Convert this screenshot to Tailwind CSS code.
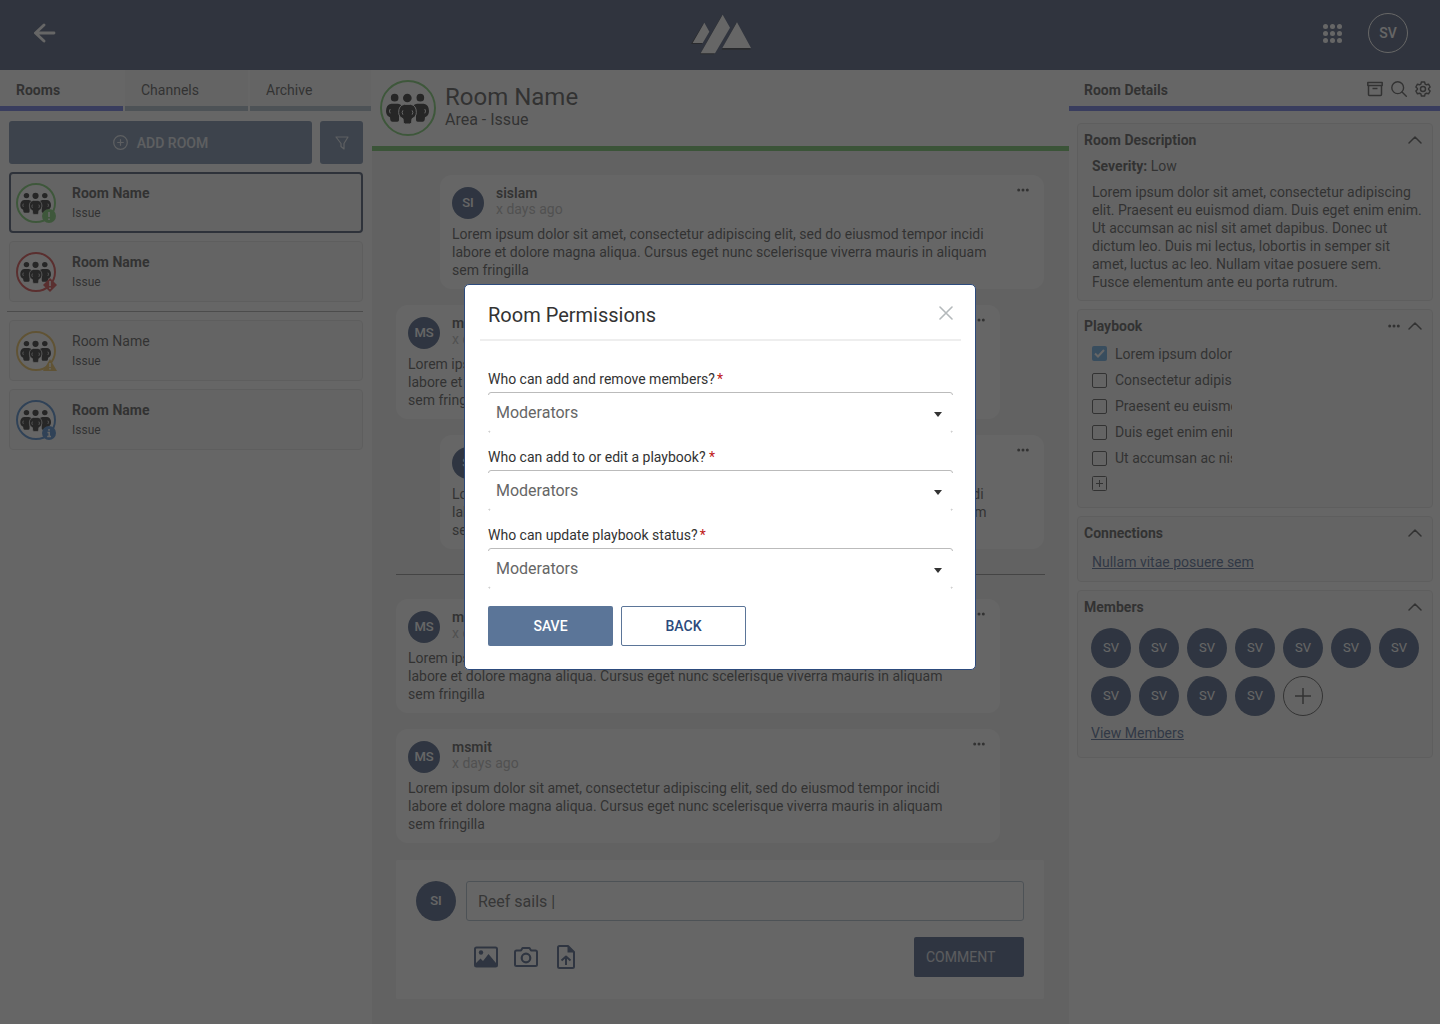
<!DOCTYPE html>
<html lang="en">
  <head>
    <meta charset="utf-8" />
    <meta name="viewport" content="width=device-width, initial-scale=1" />
    <title>Room Permissions</title>
    <script src="https://cdn.jsdelivr.net/npm/@tailwindcss/browser@4"></script>
  </head>
  <body class="min-h-screen flex flex-col bg-white font-['Roboto',sans-serif] text-sm text-[#333]">

    <!-- shared icons -->
    <svg class="hidden" aria-hidden="true">
      <symbol id="people" viewBox="30 60 168 168">
        <g fill="#000">
          <circle cx="74" cy="113" r="11.500" />
          <circle cx="151" cy="113" r="11.500" />
          <circle cx="112" cy="114" r="13" />
          <path d="M64 131h20q12 2 12 10l-9 12v27q0 5-5 5H67q-5 0-6-5l-1-8q-12-5-12-19 0-19 16-22z" />
          <path d="M161 131h-20q-12 2-12 10l9 12v27q0 5 5 5h15q5 0 6-5l1-8q12-5 12-19 0-19-16-22z" />
        </g>
        <path d="M103 133h19q17 3 17 24 0 14-13 19l-1 11q-1 5-6 5h-13q-5 0-6-5l-1-11q-13-5-13-19 0-21 17-24z" fill="#000" stroke="#fff" stroke-width="3" />
        <path d="M60 148q-4 5 0 11M165 148q4 5 0 11M98 152q-4 5 0 11M127 152q4 5 0 11" fill="none" stroke="#fff" stroke-width="3" stroke-linecap="round" />
      </symbol>
      <symbol id="chevron" viewBox="0 0 14 8">
        <path d="M1 7l6-6 6 6" fill="none" stroke="currentColor" stroke-width="1.500" stroke-linecap="round" stroke-linejoin="round" />
      </symbol>
      <symbol id="dots" viewBox="0 0 12 4">
        <circle cx="1.700" cy="2" r="1.500" /><circle cx="6" cy="2" r="1.500" /><circle cx="10.300" cy="2" r="1.500" />
      </symbol>
    </svg>

    <header class="h-[70px] bg-[#2b3b5f] grid grid-cols-3 items-center pl-[34px] pr-8 text-white">
      <a href="#" aria-label="Back" class="w-6 mb-[2px]">
        <svg class="w-[22px] h-[22px]" viewBox="0 0 22 22" fill="none" stroke="currentColor" stroke-width="2.800" stroke-linecap="round"><path d="M20 10H2M10 2L1.500 10l8.500 8" /></svg>
      </a>
      <svg class="w-[62px] h-[42px] justify-self-center" viewBox="89 42 186 126">
        <path d="M129 71l15 27-20 34H92zM184 47l22 39-45 77h-42zM227 70l44 79h-87z" fill="#000" opacity=".7" />
        <path d="M132 68l15 27-20 34H97zM187 44l22 39-45 77h-43zM230 67l42 77h-86z" fill="#fff" />
      </svg>
      <div class="flex items-center justify-end gap-[26px]">
        <button aria-label="Apps" class="mb-1">
          <svg class="w-[19px] h-[19px]" viewBox="0 0 19 19" fill="currentColor">
            <circle cx="2.500" cy="2.500" r="2.500" /><circle cx="9.500" cy="2.500" r="2.500" /><circle cx="16.500" cy="2.500" r="2.500" />
            <circle cx="2.500" cy="9.500" r="2.500" /><circle cx="9.500" cy="9.500" r="2.500" /><circle cx="16.500" cy="9.500" r="2.500" />
            <circle cx="2.500" cy="16.500" r="2.500" /><circle cx="9.500" cy="16.500" r="2.500" /><circle cx="16.500" cy="16.500" r="2.500" />
          </svg>
        </button>
        <button class="w-10 h-10 mb-1 rounded-full border border-white font-medium">SV</button>
      </div>
    </header>

    <div class="flex-1 flex">

      <!-- rooms list -->
      <aside class="w-[372px] shrink-0 pr-px">
        <nav class="flex gap-[2px]">
          <a href="#" class="w-[123px] h-[41px] pl-4 leading-[41px] font-bold border-b-[5px] border-[#4b5be0]">Rooms</a>
          <a href="#" class="w-[123px] h-[41px] pl-4 leading-[41px] bg-[#f7f7f7] border-b-[5px] border-[#9bafbf]">Channels</a>
          <a href="#" class="flex-1 h-[41px] pl-4 leading-[41px] bg-[#f7f7f7] border-b-[5px] border-[#9bafbf]">Archive</a>
        </nav>
        <div class="flex flex-col gap-2 pl-[9px] pr-2 pt-[10px]">
          <div class="flex gap-2">
            <button class="flex-1 h-[43px] flex items-center justify-center gap-[9px] rounded-[3px] bg-[#5b7598] text-white/80 font-medium">
              <svg class="w-[15px] h-[15px]" viewBox="0 0 15 15" fill="none" stroke="currentColor" stroke-width="1.200" stroke-linecap="round"><circle cx="7.500" cy="7.500" r="6.800" /><path d="M7.500 4.700v5.600M4.700 7.500h5.600" /></svg>
              ADD ROOM
            </button>
            <button aria-label="Filter" class="w-[43px] h-[43px] flex items-center justify-center rounded-[3px] bg-[#5b7598] text-white/80">
              <svg class="w-[14px] h-[14px]" viewBox="0 0 14 14" fill="none" stroke="currentColor" stroke-width="1.200" stroke-linejoin="round"><path d="M1 1h12L9 7.500V13L6 10.500v-3z" /></svg>
            </button>
          </div>
          <a href="#" class="h-[61px] flex items-center gap-4 pl-[5px] rounded-[4px] border-2 border-[#22324f] bg-[#f7f7f7]">
            <span class="relative w-10 h-10 rounded-full border-2 border-[#62c454] bg-white">
              <svg class="w-10 h-10 -m-[2px]"><use href="#people" /></svg>
              <svg class="absolute -right-[2px] -bottom-[2px] w-[14px] h-[14px]" viewBox="0 0 14 14"><circle cx="7" cy="7" r="7" fill="#62c454" /><path d="M7 3v5M7 9.500v1.500" stroke="#fff" stroke-width="1.600" /></svg>
            </span>
            <span><b class="block leading-5">Room Name</b><span class="block text-xs leading-5">Issue</span></span>
          </a>
          <a href="#" class="h-[61px] flex items-center gap-4 pl-[6px] rounded-[4px] border border-[#e0e0e0] bg-[#f7f7f7]">
            <span class="relative w-10 h-10 rounded-full border-2 border-[#cf2525] bg-white">
              <svg class="w-10 h-10 -m-[2px]"><use href="#people" /></svg>
              <svg class="absolute -right-[3px] -bottom-[2px] w-[14px] h-[14px]" viewBox="0 0 14 14"><path d="M7 0l7 7-7 7-7-7z" fill="#cf2525" /><path d="M7 3v5M7 9.500v1.500" stroke="#fff" stroke-width="1.600" /></svg>
            </span>
            <span><b class="block leading-5">Room Name</b><span class="block text-xs leading-5">Issue</span></span>
          </a>
          <hr class="mt-px -ml-[2px] border-[#999]" />
          <a href="#" class="h-[61px] flex items-center gap-4 pl-[6px] rounded-[4px] border border-[#e0e0e0] bg-[#f7f7f7]">
            <span class="relative w-10 h-10 rounded-full border-2 border-[#e8b53c] bg-white">
              <svg class="w-10 h-10 -m-[2px]"><use href="#people" /></svg>
              <svg class="absolute -right-[3px] -bottom-[2px] w-[14px] h-[12px]" viewBox="0 0 14 12"><path d="M7 0l7 12H0z" fill="#e8b53c" /><path d="M7 4v4M7 9v1.500" stroke="#fff" stroke-width="1.500" /></svg>
            </span>
            <span><span class="block leading-5">Room Name</span><span class="block text-xs leading-5">Issue</span></span>
          </a>
          <a href="#" class="h-[61px] flex items-center gap-4 pl-[6px] rounded-[4px] border border-[#e0e0e0] bg-[#f7f7f7]">
            <span class="relative w-10 h-10 rounded-full border-2 border-[#2a72c4] bg-white">
              <svg class="w-10 h-10 -m-[2px]"><use href="#people" /></svg>
              <svg class="absolute -right-[2px] -bottom-[2px] w-[14px] h-[14px]" viewBox="0 0 14 14"><circle cx="7" cy="7" r="7" fill="#2a72c4" /><path d="M7 3v1.700M5.500 6.500h1.700V10M5.200 10.500h3.800" fill="none" stroke="#fff" stroke-width="1.500" /></svg>
            </span>
            <span><b class="block leading-5">Room Name</b><span class="block text-xs leading-5">Issue</span></span>
          </a>
        </div>
      </aside>

      <!-- conversation -->
      <main class="flex-1 min-w-0 bg-[#f0f0f0]">
        <div class="h-[81px] flex gap-[9px] pl-2 pt-[10px] bg-white border-b-[5px] border-[#56b848]">
          <span class="w-14 h-14 rounded-full border-2 border-[#62c454]"><svg class="w-14 h-14 -m-[2px]"><use href="#people" /></svg></span>
          <div class="pt-[2px]">
            <h1 class="text-2xl leading-[30px]">Room Name</h1>
            <p class="text-base leading-4">Area - Issue</p>
          </div>
        </div>
        <div class="pl-6 pr-[25px] pt-6">
          <div class="flex flex-col gap-4">
            <article class="relative ml-[44px] px-3 pt-3 pb-[10px] rounded-xl bg-white">
              <div class="flex gap-3">
                <span class="w-8 h-8 flex items-center justify-center rounded-full bg-[#273f6b] text-white text-[13px] font-medium">SI</span>
                <div class="-mt-[2px] leading-4"><b class="block font-semibold">sislam</b><span class="text-[#aaa]">x days ago</span></div>
              </div>
              <button aria-label="More" class="absolute top-[13px] right-[15px] leading-none"><svg class="w-3 h-1 fill-[#333]"><use href="#dots" /></svg></button>
              <p class="mt-[6px] leading-[18px]">Lorem ipsum dolor sit amet, consectetur adipiscing elit, sed do eiusmod tempor incidi<br />labore et dolore magna aliqua. Cursus eget nunc scelerisque viverra mauris in aliquam<br />sem fringilla</p>
            </article>
            <article class="relative mr-[44px] px-3 pt-3 pb-[10px] rounded-xl bg-white">
              <div class="flex gap-3">
                <span class="w-8 h-8 flex items-center justify-center rounded-full bg-[#273f6b] text-white text-[13px] font-medium">MS</span>
                <div class="-mt-[2px] leading-4"><b class="block font-semibold">msmit</b><span class="text-[#aaa]">x days ago</span></div>
              </div>
              <button aria-label="More" class="absolute top-[13px] right-[15px] leading-none"><svg class="w-3 h-1 fill-[#333]"><use href="#dots" /></svg></button>
              <p class="mt-[6px] leading-[18px]">Lorem ipsum dolor sit amet, consectetur adipiscing elit, sed do eiusmod tempor incidi<br />labore et dolore magna aliqua. Cursus eget nunc scelerisque viverra mauris in aliquam<br />sem fringilla</p>
            </article>
            <article class="relative ml-[44px] px-3 pt-3 pb-[10px] rounded-xl bg-white">
              <div class="flex gap-3">
                <span class="w-8 h-8 flex items-center justify-center rounded-full bg-[#273f6b] text-white text-[13px] font-medium">SI</span>
                <div class="-mt-[2px] leading-4"><b class="block font-semibold">sislam</b><span class="text-[#aaa]">x days ago</span></div>
              </div>
              <button aria-label="More" class="absolute top-[13px] right-[15px] leading-none"><svg class="w-3 h-1 fill-[#333]"><use href="#dots" /></svg></button>
              <p class="mt-[6px] leading-[18px]">Lorem ipsum dolor sit amet, consectetur adipiscing elit, sed do eiusmod tempor incidi<br />labore et dolore magna aliqua. Cursus eget nunc scelerisque viverra mauris in aliquam<br />sem fringilla</p>
            </article>
          </div>
          <hr class="mt-[25px] mb-6 -mr-px border-[#777]" />
          <div class="flex flex-col gap-4">
            <article class="relative mr-[44px] px-3 pt-3 pb-[10px] rounded-xl bg-white">
              <div class="flex gap-3">
                <span class="w-8 h-8 flex items-center justify-center rounded-full bg-[#273f6b] text-white text-[13px] font-medium">MS</span>
                <div class="-mt-[2px] leading-4"><b class="block font-semibold">msmit</b><span class="text-[#aaa]">x days ago</span></div>
              </div>
              <button aria-label="More" class="absolute top-[13px] right-[15px] leading-none"><svg class="w-3 h-1 fill-[#333]"><use href="#dots" /></svg></button>
              <p class="mt-[6px] leading-[18px]">Lorem ipsum dolor sit amet, consectetur adipiscing elit, sed do eiusmod tempor incidi<br />labore et dolore magna aliqua. Cursus eget nunc scelerisque viverra mauris in aliquam<br />sem fringilla</p>
            </article>
            <article class="relative mr-[44px] px-3 pt-3 pb-[10px] rounded-xl bg-white">
              <div class="flex gap-3">
                <span class="w-8 h-8 flex items-center justify-center rounded-full bg-[#273f6b] text-white text-[13px] font-medium">MS</span>
                <div class="-mt-[2px] leading-4"><b class="block font-semibold">msmit</b><span class="text-[#aaa]">x days ago</span></div>
              </div>
              <button aria-label="More" class="absolute top-[13px] right-[15px] leading-none"><svg class="w-3 h-1 fill-[#333]"><use href="#dots" /></svg></button>
              <p class="mt-[6px] leading-[18px]">Lorem ipsum dolor sit amet, consectetur adipiscing elit, sed do eiusmod tempor incidi<br />labore et dolore magna aliqua. Cursus eget nunc scelerisque viverra mauris in aliquam<br />sem fringilla</p>
            </article>
          </div>
          <form class="mt-[17px] px-5 pt-[21px] pb-[22px] rounded-[2px] bg-white">
            <div class="flex gap-[10px]">
              <span class="w-10 h-10 flex items-center justify-center rounded-full bg-[#273f6b] text-white text-[13px] font-medium">SI</span>
              <input type="text" aria-label="Comment" value="Reef sails |" class="flex-1 h-10 px-[11px] rounded-[3px] border border-[#9bafbf] text-base text-[#444]" />
            </div>
            <div class="mt-4 flex items-center gap-4 pl-[58px] text-[#273f6b]">
              <button type="button" aria-label="Add image"><svg class="w-6 h-6" viewBox="0 0 24 24" fill="none" stroke="currentColor" stroke-width="2"><rect x="1" y="2.500" width="22" height="19" rx="1.500" /><circle cx="7" cy="7.500" r="2.200" fill="currentColor" stroke="none" /><path d="M2 21v-3l4.500-4.500L9 16l5.500-7 7.500 9v3z" fill="currentColor" stroke="none" /></svg></button>
              <button type="button" aria-label="Take photo"><svg class="w-6 h-6" viewBox="0 0 24 24" fill="none" stroke="currentColor" stroke-width="2" stroke-linejoin="round"><path d="M2.500 5.500H7L8.500 3h7L17 5.500h4.500q1.500 0 1.500 1.500v12.500q0 1.500-1.500 1.500h-19Q1 21 1 19.500V7q0-1.500 1.500-1.500z" /><circle cx="12" cy="13" r="4.300" stroke-width="2.200" /></svg></button>
              <button type="button" aria-label="Attach file"><svg class="w-6 h-6" viewBox="0 0 24 24" fill="none" stroke="currentColor" stroke-width="2" stroke-linejoin="round"><path d="M5.500 1H14l6 6v14.500q0 1.500-1.500 1.500h-13Q4 23 4 21.500v-19Q4 1 5.500 1z" /><path d="M13.500 1v6.500H20z" fill="currentColor" stroke="none" /><path d="M12 20v-8.500M7.500 15.500l4.500-4 4.500 4" /></svg></button>
              <button type="submit" class="ml-auto w-[110px] h-10 pl-3 rounded-[2px] bg-[#273f6b] text-left text-white/80">COMMENT</button>
            </div>
          </form>
        </div>
      </main>

      <!-- room details -->
      <aside class="w-[371px] shrink-0">
        <div class="h-[41px] flex items-center gap-2 pl-[15px] pr-[9px] pt-[2px] border-b-[5px] border-[#4b5be0]">
          <h2 class="font-bold pt-[2px] mr-auto">Room Details</h2>
          <button aria-label="Archive room"><svg class="w-4 h-4" viewBox="0 0 16 16" fill="none" stroke="currentColor" stroke-width="1.500" stroke-linejoin="round"><path d="M.8 1.500h14.400v3H.8zM1.500 4.500v9q0 .9.900.9h11.200q.9 0 .9-.9v-9M5.500 7.500h5" /></svg></button>
          <button aria-label="Search"><svg class="w-4 h-4" viewBox="0 0 16 16" fill="none" stroke="currentColor" stroke-width="1.400" stroke-linecap="round"><circle cx="6.700" cy="6.700" r="5.900" /><path d="M11 11l4.300 4.300" /></svg></button>
          <button aria-label="Settings"><svg class="w-4 h-4" viewBox="0 0 24 24" fill="none" stroke="currentColor" stroke-width="2.200" stroke-linejoin="round"><path d="M9.600 1.500h4.800l.8 3.100 2 1.100 3.100-.9 2.400 4.200-2.300 2.200v1.600l2.300 2.200-2.400 4.200-3.100-.9-2 1.100-.8 3.100H9.600l-.8-3.100-2-1.100-3.100.9L1.300 15l2.300-2.200v-1.600L1.300 9l2.400-4.200 3.100.9 2-1.100z" /><circle cx="12" cy="12" r="3.800" /></svg></button>
        </div>
        <div class="flex flex-col gap-2 pl-2 pr-[7px] pt-3">
          <section class="px-[6px] pt-2 pb-[9px] rounded-[4px] border border-[#e0e0e0] bg-[#f7f7f7]">
            <div class="flex items-center justify-between pr-1 leading-4">
              <h3 class="font-bold">Room Description</h3>
              <button aria-label="Collapse"><svg class="w-[14px] h-2"><use href="#chevron" /></svg></button>
            </div>
            <div class="pl-2 leading-[18px]">
              <p class="mt-[9px]"><b>Severity:</b> Low</p>
              <p class="mt-2">Lorem ipsum dolor sit amet, consectetur adipiscing<br />elit. Praesent eu euismod diam. Duis eget enim enim.<br />Ut accumsan ac nisl sit amet dapibus. Donec ut<br />dictum leo. Duis mi lectus, lobortis in semper sit<br />amet, luctus ac leo. Nullam vitae posuere sem.<br />Fusce elementum ante eu porta rutrum.</p>
            </div>
          </section>
          <section class="px-[6px] pt-2 pb-[14px] rounded-[4px] border border-[#e0e0e0] bg-[#f7f7f7]">
            <div class="flex items-center pr-1 leading-4">
              <h3 class="mr-auto font-bold">Playbook</h3>
              <button aria-label="More" class="mr-2"><svg class="w-3 h-1 fill-[#333]"><use href="#dots" /></svg></button>
              <button aria-label="Collapse"><svg class="w-[14px] h-2"><use href="#chevron" /></svg></button>
            </div>
            <div class="pl-2 pt-[7px] leading-[26px]">
              <label class="w-[140px] h-[26px] flex items-center gap-2 overflow-hidden whitespace-nowrap"><span class="relative w-[15px] h-[15px] mb-[2px] shrink-0"><input type="checkbox" checked class="peer block w-[15px] h-[15px] appearance-none rounded-[2px] bg-[#4a9ae0]" /><svg class="absolute inset-0 w-[15px] h-[15px] pointer-events-none" viewBox="0 0 15 15" fill="none" stroke="#fff" stroke-width="2"><path d="M3 7.500l3 3 6-6.500" /></svg></span>Lorem ipsum dolor</label>
              <label class="w-[140px] h-[26px] flex items-center gap-2 overflow-hidden whitespace-nowrap"><input type="checkbox" class="w-[15px] h-[15px] shrink-0 appearance-none rounded-[2px] border border-[#333]" />Consectetur adipiscing</label>
              <label class="w-[140px] h-[26px] flex items-center gap-2 overflow-hidden whitespace-nowrap"><input type="checkbox" class="w-[15px] h-[15px] shrink-0 appearance-none rounded-[2px] border border-[#333]" />Praesent eu euismod</label>
              <label class="w-[140px] h-[26px] flex items-center gap-2 overflow-hidden whitespace-nowrap"><input type="checkbox" class="w-[15px] h-[15px] shrink-0 appearance-none rounded-[2px] border border-[#333]" />Duis eget enim enim</label>
              <label class="w-[140px] h-[26px] flex items-center gap-2 overflow-hidden whitespace-nowrap"><input type="checkbox" class="w-[15px] h-[15px] shrink-0 appearance-none rounded-[2px] border border-[#333]" />Ut accumsan ac nisl</label>
              <button aria-label="Add item" class="h-5 mt-[2px] block"><svg class="w-[15px] h-[15px]" viewBox="0 0 15 15" fill="none" stroke="currentColor"><rect x=".5" y=".5" width="14" height="14" rx="1" /><path d="M7.500 4v7M4 7.500h7" /></svg></button>
            </div>
          </section>
          <section class="px-[6px] pt-2 pb-[10px] rounded-[4px] border border-[#e0e0e0] bg-[#f7f7f7]">
            <div class="flex items-center justify-between pr-1 leading-4">
              <h3 class="font-bold">Connections</h3>
              <button aria-label="Collapse"><svg class="w-[14px] h-2"><use href="#chevron" /></svg></button>
            </div>
            <a href="#" class="block mt-3 pl-2 leading-[18px] text-[#2c4a7c] underline">Nullam vitae posuere sem</a>
          </section>
          <section class="px-[6px] pt-2 pb-[15px] rounded-[4px] border border-[#e0e0e0] bg-[#f7f7f7]">
            <div class="flex items-center justify-between pr-1 leading-4">
              <h3 class="font-bold">Members</h3>
              <button aria-label="Collapse"><svg class="w-[14px] h-2"><use href="#chevron" /></svg></button>
            </div>
            <div class="mt-[13px] pl-[7px] flex flex-wrap gap-2 text-white text-[13px]">
              <span class="w-10 h-10 flex items-center justify-center rounded-full bg-[#273f6b]">SV</span>
              <span class="w-10 h-10 flex items-center justify-center rounded-full bg-[#273f6b]">SV</span>
              <span class="w-10 h-10 flex items-center justify-center rounded-full bg-[#273f6b]">SV</span>
              <span class="w-10 h-10 flex items-center justify-center rounded-full bg-[#273f6b]">SV</span>
              <span class="w-10 h-10 flex items-center justify-center rounded-full bg-[#273f6b]">SV</span>
              <span class="w-10 h-10 flex items-center justify-center rounded-full bg-[#273f6b]">SV</span>
              <span class="w-10 h-10 flex items-center justify-center rounded-full bg-[#273f6b]">SV</span>
              <span class="w-10 h-10 flex items-center justify-center rounded-full bg-[#273f6b]">SV</span>
              <span class="w-10 h-10 flex items-center justify-center rounded-full bg-[#273f6b]">SV</span>
              <span class="w-10 h-10 flex items-center justify-center rounded-full bg-[#273f6b]">SV</span>
              <span class="w-10 h-10 flex items-center justify-center rounded-full bg-[#273f6b]">SV</span>
              <button aria-label="Add member" class="w-10 h-10 flex items-center justify-center rounded-full border border-[#333] text-[#333]"><svg class="w-4 h-4" viewBox="0 0 16 16" stroke="currentColor" stroke-width="1.500"><path d="M8 0v16M0 8h16" /></svg></button>
            </div>
            <a href="#" class="block mt-2 pl-[7px] leading-[18px] text-[#2c4a7c] underline">View Members</a>
          </section>
        </div>
      </aside>
    </div>

    <!-- permissions dialog -->
    <div class="fixed inset-0 flex items-start justify-center pt-[284px] bg-[#333]/75">
      <div role="dialog" aria-modal="true" aria-labelledby="dialog-title" class="w-full max-w-[512px] pl-[15px] pr-[14px] pb-[23px] rounded-[5px] border border-[#2c4a7c] bg-white">
        <div class="h-14 flex items-center justify-between px-2 pt-1 border-b-2 border-[#eee]">
          <h2 id="dialog-title" class="mt-[2px] text-xl">Room Permissions</h2>
          <button aria-label="Close" class="mb-[2px]"><svg class="w-[14px] h-[14px]" viewBox="0 0 14 14" fill="none" stroke="#b4b9bb" stroke-width="1.600" stroke-linecap="round"><path d="M1 1l12 12M13 1L1 13" /></svg></button>
        </div>
        <form class="px-2 pt-[29px]">
          <!-- the covers hide the select's sides and bottom edge, leaving the corners -->
          <label for="perm-members" class="block leading-[18px]">Who can add and remove members?<span class="pl-[2px] text-[#c01818]">*</span></label>
          <div class="relative mt-1 mb-[15px] h-[41px] before:absolute before:inset-x-0 before:top-[3px] before:bottom-[2px] before:border-x before:border-white before:pointer-events-none after:absolute after:inset-x-[2px] after:bottom-0 after:h-px after:bg-white">
            <select id="perm-members" class="w-full h-[41px] px-[7px] pt-px appearance-none rounded-[3px] border border-[#bbb] text-base text-[#666]"><option>Moderators</option></select>
            <svg class="absolute right-[11px] top-5 w-2 h-[5px] pointer-events-none" viewBox="0 0 8 5"><path d="M0 0h8L4 5z" fill="#333" /></svg>
          </div>
          <label for="perm-edit" class="block leading-[18px]">Who can add to or edit a playbook? <span class="text-[#c01818]">*</span></label>
          <div class="relative mt-1 mb-[15px] h-[41px] before:absolute before:inset-x-0 before:top-[3px] before:bottom-[2px] before:border-x before:border-white before:pointer-events-none after:absolute after:inset-x-[2px] after:bottom-0 after:h-px after:bg-white">
            <select id="perm-edit" class="w-full h-[41px] px-[7px] pt-px appearance-none rounded-[3px] border border-[#bbb] text-base text-[#666]"><option>Moderators</option></select>
            <svg class="absolute right-[11px] top-5 w-2 h-[5px] pointer-events-none" viewBox="0 0 8 5"><path d="M0 0h8L4 5z" fill="#333" /></svg>
          </div>
          <label for="perm-status" class="block leading-[18px]">Who can update playbook status?<span class="pl-[2px] text-[#c01818]">*</span></label>
          <div class="relative mt-1 h-[41px] before:absolute before:inset-x-0 before:top-[3px] before:bottom-[2px] before:border-x before:border-white before:pointer-events-none after:absolute after:inset-x-[2px] after:bottom-0 after:h-px after:bg-white">
            <select id="perm-status" class="w-full h-[41px] px-[7px] pt-px appearance-none rounded-[3px] border border-[#bbb] text-base text-[#666]"><option>Moderators</option></select>
            <svg class="absolute right-[11px] top-5 w-2 h-[5px] pointer-events-none" viewBox="0 0 8 5"><path d="M0 0h8L4 5z" fill="#333" /></svg>
          </div>
          <div class="mt-[17px] flex gap-2">
            <button type="submit" class="w-[125px] h-10 rounded-[2px] bg-[#5b7598] text-white font-medium">SAVE</button>
            <button type="button" class="w-[125px] h-10 rounded-[2px] border border-[#5b7598] text-[#2c4a7c] font-medium">BACK</button>
          </div>
        </form>
      </div>
    </div>
  </body>
</html>
